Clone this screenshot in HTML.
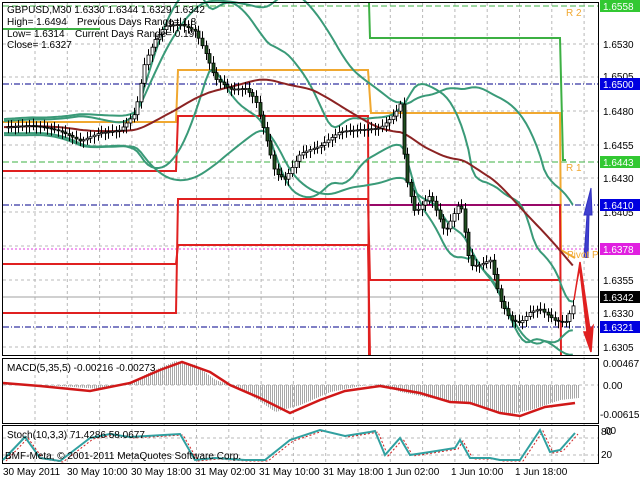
<!DOCTYPE html>
<html><head><meta charset="utf-8"><style>
body{margin:0;width:640px;height:480px;background:#fff;overflow:hidden;font-family:"Liberation Sans",sans-serif;}
svg{position:absolute;left:0;top:0}
text{font-family:"Liberation Sans",sans-serif;font-size:10px;fill:#000}
</style></head><body>
<svg id="s" width="640" height="480" viewBox="0 0 640 480">
<rect x="0" y="0" width="640" height="480" fill="#fff"/>
<g id="grid" stroke="#b8b8b8" stroke-dasharray="3,3" stroke-width="1"></g>
<g fill="none">
<line x1="3" y1="6" x2="598" y2="6" stroke="#3cb043" stroke-dasharray="6,3"/>
<line x1="3" y1="162" x2="598" y2="162" stroke="#3cb043" stroke-dasharray="6,3"/>
<line x1="3" y1="84" x2="598" y2="84" stroke="#00008b" stroke-dasharray="6,2,1,2"/>
<line x1="3" y1="205" x2="598" y2="205" stroke="#00008b" stroke-dasharray="6,2,1,2"/>
<line x1="3" y1="327" x2="598" y2="327" stroke="#00008b" stroke-dasharray="6,2,1,2"/>
<line x1="3" y1="249" x2="598" y2="249" stroke="#e040e0" stroke-dasharray="2,2"/>
<line x1="3" y1="297" x2="598" y2="297" stroke="#a0a0a0"/>
<polyline points="3,29 100,29" stroke="#3cb043" stroke-width="2"/>
<polyline points="369,3 370,38 560,38 563,160 566,160" stroke="#3cb043" stroke-width="2"/>
<polyline points="3,122 176,122 178,70 368,70 371,113 560,113 561,250 575,258" stroke="#f0a830" stroke-width="2"/>
<polyline points="3,171 176,171 178,116 368,116 369,356" stroke="#e02020" stroke-width="2"/>
<polyline points="3,264 176,264 178,245 368,245 370,356" stroke="#e02020" stroke-width="2"/>
<polyline points="3,313 176,313 178,199 368,199 370,280 560,280" stroke="#e02020" stroke-width="2"/>
<polyline points="370,205 560,205 561,356" stroke="#e02020" stroke-width="2"/>
<line x1="370" y1="205" x2="560" y2="205" stroke="#800080" stroke-width="1.5"/>
</g>
<g id="bands" fill="none"></g>
<path id="wicks" d="" stroke="#000" stroke-width="1" fill="none"/>
<g id="candles"></g>
<polyline points="584,258 587,215 584,215 591,188 592,215 589,215 588,258" fill="#4040d0" stroke="#3030c0"/>
<polyline points="574,300 580,262 590,330 593,326 591,352 584,332 587,332 580,270" fill="#e02020" stroke="#e02020" stroke-width="1.5"/>
<text x="566" y="16" style="fill:#f0a830">R 2</text>
<text x="566" y="171" style="fill:#f0a830">R 1</text>
<text x="567" y="258" style="fill:#f0a830">Pivot P</text>
<g stroke="#000" fill="none">
<rect x="2.5" y="2.5" width="596" height="353"/>
<rect x="2.5" y="358.5" width="596" height="65"/>
<rect x="2.5" y="425.5" width="596" height="38"/>
</g>
<path id="hist" d="" stroke="#a8a8a8" stroke-width="1" fill="none"/>
<g id="macd"></g>
<g id="stoch"></g>
<g>
<text x="603" y="48">1.6530</text>
<text x="603" y="80">1.6505</text>
<text x="603" y="115">1.6480</text>
<text x="603" y="149">1.6455</text>
<text x="603" y="182">1.6430</text>
<text x="603" y="216">1.6405</text>
<text x="603" y="284">1.6355</text>
<text x="603" y="317">1.6330</text>
<text x="603" y="351">1.6305</text>
<rect x="600" y="0" width="40" height="12" fill="#32c832"/><text x="603" y="10" style="fill:#fff">1.6558</text>
<rect x="600" y="78" width="40" height="12" fill="#0000e0"/><text x="603" y="88" style="fill:#fff">1.6500</text>
<rect x="600" y="156" width="40" height="12" fill="#32c832"/><text x="603" y="166" style="fill:#fff">1.6443</text>
<rect x="600" y="199" width="40" height="12" fill="#0000e0"/><text x="603" y="209" style="fill:#fff">1.6410</text>
<rect x="600" y="243" width="40" height="12" fill="#e020e0"/><text x="603" y="253" style="fill:#fff">1.6378</text>
<rect x="600" y="291" width="40" height="12" fill="#000"/><text x="603" y="301" style="fill:#fff">1.6342</text>
<rect x="600" y="321" width="40" height="12" fill="#0000e0"/><text x="603" y="331" style="fill:#fff">1.6321</text>
<text x="603" y="367">0.00467</text>
<text x="603" y="389">0.00</text>
<text x="600" y="418">-0.00615</text>
<text x="601" y="435">80</text><text x="605" y="434">00</text>
<text x="601" y="458">20</text>
</g>
<text x="7" y="13">GBPUSD,M30  1.6330 1.6344 1.6329 1.6342</text>
<text x="7" y="25">High= 1.6494</text><text x="77" y="25">Previous Days Range= 1.8</text>
<text x="7" y="37">Low= 1.6314</text><text x="75" y="37">Current Days Range= 0.19</text>
<text x="7" y="48">Close= 1.6327</text>
<text x="7" y="371">MACD(5,35,5) -0.00216 -0.00273</text>
<text x="7" y="438">Stoch(10,3,3) 71.4286 58.0677</text>
<text x="5" y="459">BMF-Meta, © 2001-2011 MetaQuotes Software Corp.</text>
<g>
<text x="3" y="475">30 May 2011</text>
<text x="67" y="475">30 May 10:00</text>
<text x="131" y="475">30 May 18:00</text>
<text x="195" y="475">31 May 02:00</text>
<text x="259" y="475">31 May 10:00</text>
<text x="323" y="475">31 May 18:00</text>
<text x="387" y="475">1 Jun 02:00</text>
<text x="451" y="475">1 Jun 10:00</text>
<text x="515" y="475">1 Jun 18:00</text>
</g>
</svg>
<script>
(function(){
var NS="http://www.w3.org/2000/svg";
function el(p,t,a){var e=document.createElementNS(NS,t);for(var k in a)e.setAttribute(k,String(a[k]));p.appendChild(e);return e;}
function f(n){return (Math.round(n*10)/10).toString();}
var g=document.getElementById('grid');
for(var x=35;x<598;x+=32.3){el(g,'line',{x1:f(x),y1:3,x2:f(x),y2:463});}
[44,77,111,145,178,212,246,280,313,347].forEach(function(y){el(g,'line',{x1:3,y1:y,x2:598,y2:y});});
el(g,'line',{x1:3,y1:385,x2:598,y2:385});el(g,'line',{x1:3,y1:438,x2:598,y2:438});el(g,'line',{x1:3,y1:455,x2:598,y2:455});
function interp(pts,x){for(var i=0;i<pts.length-1;i++){if(x>=pts[i][0]&&x<=pts[i+1][0]){var t=(x-pts[i][0])/(pts[i+1][0]-pts[i][0]);return pts[i][1]+t*(pts[i+1][1]-pts[i][1]);}}return pts[pts.length-1][1];}
var P=[[3,125],[30,128],[60,135],[80,142],[100,130],[120,126],[135,110],[145,60],[155,40],[165,28],[180,28],[195,35],[205,55],[215,80],[230,88],[245,85],[255,95],[265,130],[275,170],[285,178],[300,155],[320,150],[340,135],[360,130],[380,125],[395,110],[400,100],[405,170],[415,210],[430,195],[445,235],[460,205],[470,270],[480,268],[490,262],[500,300],[510,318],[520,320],[530,308],[540,305],[555,318],[565,322],[576,300]];
var xs=[],ps=[];
for(var x=4;x<=576;x+=3.6){xs.push(x);ps.push(interp(P,x)+Math.sin(x*1.7)*4);}
var c=document.getElementById('candles');var wd="";
for(var i=1;i<xs.length;i++){var o=ps[i-1],cl=ps[i];var tp=Math.min(o,cl),bt=Math.max(o,cl);if(bt-tp<1)bt=tp+1;
var hx=Math.round(xs[i])+0.5;
wd+="M"+hx+" "+f(tp-3-Math.abs(Math.sin(i))*4)+"V"+f(bt+3+Math.abs(Math.cos(i))*4);
el(c,'rect',{x:hx-1.5,y:f(tp),width:3,height:f(bt-tp),fill:(cl<o?'#fff':'#1e4d1e'),stroke:'#000','stroke-width':0.8});}
document.getElementById('wicks').setAttribute('d',wd);
var b=document.getElementById('bands');
function poly(arr,col,sw){el(b,'polyline',{points:arr.map(function(p){return f(p[0])+','+f(p[1])}).join(' '),stroke:col,'stroke-width':sw||2,fill:'none'});}
function band(n,k,add){var up=[],lo=[],mid=[];for(var i=0;i<xs.length;i++){var s=Math.max(0,i-n+1),m=0,cnt=0;for(var j=s;j<=i;j++){m+=ps[j];cnt++;}m/=cnt;var v=0;for(var j=s;j<=i;j++)v+=(ps[j]-m)*(ps[j]-m);v=Math.sqrt(v/cnt);mid.push([xs[i],m]);up.push([xs[i],m-k*v-add]);lo.push([xs[i],m+k*v+add]);}return [up,mid,lo];}
var b1=band(20,1.6,6);poly(b1[0],'#3a9a78');poly(b1[2],'#3a9a78');
var b2=band(40,1.6,8);poly(b2[0],'#3a9a78');poly(b2[2],'#3a9a78');
var b3=band(48,1.0,4);poly(b3[1],'#8b2323');
var m=document.getElementById('macd');
var H=[[3,383],[60,386],[100,389],[130,383],[150,372],[175,361],[195,365],[215,380],[230,385],[250,395],[275,412],[300,405],[330,392],[360,386],[380,384],[400,392],[430,398],[460,402],[490,410],[510,414],[530,410],[560,400],[578,398]];
var hd="";for(var x=4;x<=578;x+=2){hd+="M"+(x+0.5)+" 385V"+f(interp(H,x));}
document.getElementById('hist').setAttribute('d',hd);
var S=[[3,383],[40,386],[90,391],[130,383],[160,370],[182,362],[210,372],[230,385],[260,398],[290,413],[320,400],[345,391],[380,386],[420,393],[450,402],[470,403],[500,413],[520,416],[545,407],[575,403]];
el(m,'polyline',{points:S.map(function(p){return p.join(',')}).join(' '),stroke:'#d01818','stroke-width':2.5,fill:'none'});
var st=document.getElementById('stoch');
var T=[[3,460],[25,437],[40,458],[60,461],[90,438],[110,434],[130,437],[180,434],[195,460],[215,458],[245,460],[265,460],[290,440],[320,430],[345,436],[370,432],[375,431],[385,455],[400,438],[410,455],[430,452],[455,448],[460,440],[470,458],[490,458],[500,460],[520,460],[540,430],[550,452],[560,450],[575,433]];
el(st,'polyline',{points:T.map(function(p){return (p[0]+3)+','+(p[1]+1)}).join(' '),stroke:'#d02020','stroke-dasharray':'2,2',fill:'none'});
el(st,'polyline',{points:T.map(function(p){return p.join(',')}).join(' '),stroke:'#30a0a0','stroke-width':2,fill:'none'});
})();
</script>
</body></html>
